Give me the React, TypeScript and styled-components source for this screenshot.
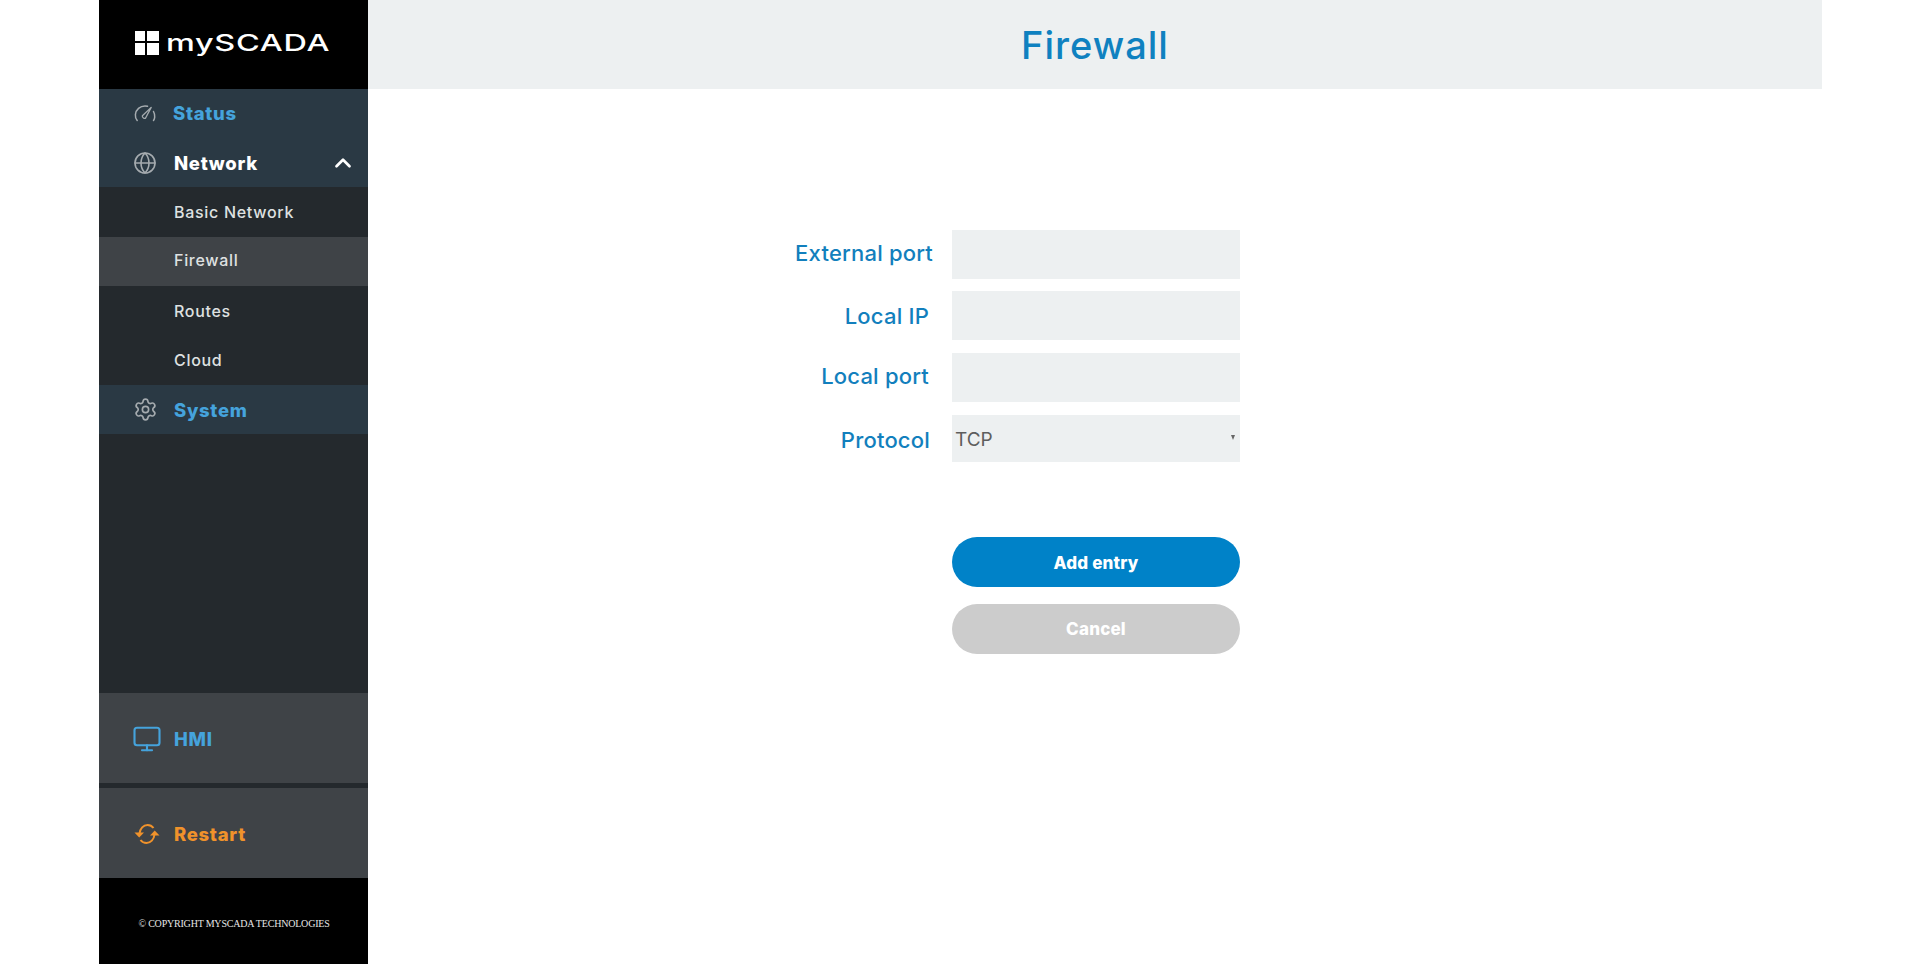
import React from "react";
import styled, { createGlobalStyle } from "styled-components";
import { ChevronUp, Globe, Monitor, Settings } from "lucide-react";

const GlobalStyle = createGlobalStyle`
  html, body {
    margin: 0;
    background: #fff;
    font-family: "Inter", "Liberation Sans", sans-serif;
  }
  * {
    box-sizing: border-box;
  }
`;

const Page = styled.div`
  display: flex;
  width: 1723px;
  height: 964px;
  margin-left: 99px;
`;

const Sidebar = styled.aside`
  display: flex;
  flex-direction: column;
  width: 269px;
  flex-shrink: 0;
  background: #24292d;
`;

const Brand = styled.div`
  display: flex;
  align-items: center;
  gap: 7px;
  height: 89px;
  padding: 0 0 4px 36px;
  background: #000;
`;

const LogoMark = styled.div`
  display: grid;
  grid-template-columns: 10px 12px;
  grid-template-rows: 10px 12px;
  gap: 2px;
  span {
    background: #fff;
  }
`;

const LogoText = styled.span`
  color: #fff;
  font-size: 23px;
  font-weight: 500;
  letter-spacing: 0.5px;
  transform: scaleX(1.41);
  transform-origin: left center;
`;

const NavItem = styled.div<{ $height?: number; $drop?: number }>`
  display: flex;
  align-items: center;
  height: ${(p) => p.$height ?? 49}px;
  padding-left: 35px;
  padding-top: ${(p) => p.$drop ?? 0}px;
  background: #2a3944;
  color: #a5abaf;
`;

const NavIcon = styled.span<{ $width?: number; $gap?: number }>`
  display: flex;
  justify-content: center;
  width: ${(p) => p.$width ?? 22}px;
  margin-right: ${(p) => p.$gap ?? 18}px;
  svg {
    flex-shrink: 0;
  }
`;

const NavLabel = styled.span<{ $color: string }>`
  flex: 1;
  color: ${(p) => p.$color};
  font-size: 18.5px;
  font-weight: 800;
  letter-spacing: 0.7px;
`;

const Caret = styled.span`
  display: flex;
  margin-right: 12px;
  color: #fff;
`;

const SubItem = styled.div<{ $active?: boolean; $height?: number; $lift?: number }>`
  display: flex;
  align-items: center;
  height: ${(p) => p.$height ?? 50}px;
  padding-left: 75px;
  padding-bottom: ${(p) => p.$lift ?? 0}px;
  background: ${(p) => (p.$active ? "#3f4347" : "transparent")};
  color: #dfe1e1;
  font-size: 16px;
  font-weight: 500;
  letter-spacing: 0.7px;
`;

const Spacer = styled.div`
  flex: 1;
`;

const BottomItem = styled.div`
  display: flex;
  align-items: center;
  height: 90px;
  padding: 1px 0 0 35px;
  background: #3f4347;
`;

const Divider = styled.div`
  height: 5px;
`;

const Copyright = styled.div`
  display: flex;
  align-items: center;
  justify-content: center;
  height: 86px;
  padding: 5px 0 0 1px;
  background: #000;
  color: #e6e6e6;
  font-family: "Liberation Serif", serif;
  font-size: 10px;
  letter-spacing: -0.2px;
  white-space: nowrap;
`;

const Main = styled.main`
  flex: 1;
`;

const Header = styled.header`
  display: flex;
  align-items: center;
  justify-content: center;
  height: 89px;
  background: #edf0f1;
`;

const Title = styled.h1`
  margin: 0;
  color: #0f81c0;
  font-size: 38px;
  font-weight: 500;
  letter-spacing: 1px;
`;

const Form = styled.form`
  display: flex;
  flex-direction: column;
  padding: 141px 0 0 584px;
`;

const Row = styled.div<{ $mb: number }>`
  position: relative;
  display: flex;
  margin-bottom: ${(p) => p.$mb}px;
`;

const FieldLabel = styled.label<{ $right: number; $top: number }>`
  position: absolute;
  top: ${(p) => p.$top}px;
  right: calc(100% + ${(p) => p.$right}px);
  color: #127fbd;
  font-size: 22px;
  font-weight: 500;
  letter-spacing: 0.2px;
  white-space: nowrap;
`;

const Field = styled.input`
  display: block;
  width: 288px;
  height: 49px;
  border: 0;
  outline: 0;
  background: #edf0f1;
`;

const Select = styled.div`
  position: relative;
  width: 288px;
  height: 47px;
  padding: 13px 0 0 3px;
  background: #edf0f1;
  color: #5e5e5e;
  font-size: 19px;
`;

const SelectArrow = styled.span`
  position: absolute;
  top: 20px;
  right: 5px;
  border-left: 2.5px solid transparent;
  border-right: 2.5px solid transparent;
  border-top: 5px solid #666;
`;

const PillButton = styled.button<{ $bg: string; $drop?: number }>`
  display: block;
  width: 288px;
  height: 50px;
  margin-bottom: 17px;
  padding: ${(p) => p.$drop ?? 0}px 0 0;
  border: 0;
  border-radius: 25px;
  background: ${(p) => p.$bg};
  color: #fff;
  font-family: inherit;
  font-size: 17px;
  font-weight: 800;
  letter-spacing: 0.2px;
`;

const Actions = styled.div`
  margin-top: 75px;
`;

const StatusIcon = () => (
  <svg width="22" height="18" viewBox="0 0 22 18" fill="none" stroke="#a5abaf" strokeWidth="1.5" strokeLinecap="round">
    <path d="M3.200 16.500C1.800 14.800 1.200 12.800 1.400 10.600 1.900 5.600 6 2 11 2c.9 0 1.700.1 2.500.3" />
    <path d="M19.500 7.500c1 1.800 1.400 3.700 1.200 5.600-.1 1.200-.5 2.400-1.200 3.400" />
    <path d="M8.400 11.800 17.200 3.400 11.600 14C10.600 15.200 7.800 13.400 8.400 11.800Z" strokeLinejoin="round" strokeWidth="1.300" />
  </svg>
);

const RestartIcon = () => (
  <svg width="26" height="22" viewBox="0 0 26 22" fill="none" stroke="#f0922b" strokeWidth="2">
    <path d="M5.500 10.500C6 5.500 9.500 2 13.500 2c2.500 0 4.500 1 6 3" />
    <path d="M20.500 11.500C20 16.500 16.500 20 12.500 20c-2.500 0-4.500-1-6-3" />
    <path d="M0.500 9.500h9.500L5.200 14.500Z" fill="#f0922b" stroke="none" />
    <path d="M16 12.500h9.500L20.700 7.500Z" fill="#f0922b" stroke="none" />
  </svg>
);

const App = () => {
  return (
    <>
      <GlobalStyle />
      <Page>
        <Sidebar>
          <Brand>
            <LogoMark>
              <span />
              <span />
              <span />
              <span />
            </LogoMark>
            <LogoText>mySCADA</LogoText>
          </Brand>
          <NavItem $height={48}>
            <NavIcon $gap={17}>
              <StatusIcon />
            </NavIcon>
            <NavLabel $color="#45a3dc">Status</NavLabel>
          </NavItem>
          <NavItem $height={50} $drop={1}>
            <NavIcon>
              <Globe size={24} strokeWidth={1.6} />
            </NavIcon>
            <NavLabel $color="#fff">Network</NavLabel>
            <Caret>
              <ChevronUp size={26} strokeWidth={2.5} />
            </Caret>
          </NavItem>
          <SubItem>Basic Network</SubItem>
          <SubItem $active $height={49} $lift={3}>
            Firewall
          </SubItem>
          <SubItem>Routes</SubItem>
          <SubItem $height={49} $lift={2}>
            Cloud
          </SubItem>
          <NavItem>
            <NavIcon>
              <Settings size={25} strokeWidth={1.6} />
            </NavIcon>
            <NavLabel $color="#45a3dc">System</NavLabel>
          </NavItem>
          <Spacer />
          <BottomItem>
            <NavIcon $width={26} $gap={14}>
              <Monitor size={30} strokeWidth={1.7} color="#45a3dc" />
            </NavIcon>
            <NavLabel $color="#45a3dc">HMI</NavLabel>
          </BottomItem>
          <Divider />
          <BottomItem>
            <NavIcon $width={26} $gap={14}>
              <RestartIcon />
            </NavIcon>
            <NavLabel $color="#f0922b">Restart</NavLabel>
          </BottomItem>
          <Copyright>© COPYRIGHT MYSCADA TECHNOLOGIES</Copyright>
        </Sidebar>
        <Main>
          <Header>
            <Title>Firewall</Title>
          </Header>
          <Form>
            <Row $mb={12}>
              <FieldLabel $right={19} $top={10}>
                External port
              </FieldLabel>
              <Field />
            </Row>
            <Row $mb={13}>
              <FieldLabel $right={23} $top={12}>
                Local IP
              </FieldLabel>
              <Field />
            </Row>
            <Row $mb={13}>
              <FieldLabel $right={23} $top={10}>
                Local port
              </FieldLabel>
              <Field />
            </Row>
            <Row $mb={0}>
              <FieldLabel $right={22} $top={12}>
                Protocol
              </FieldLabel>
              <Select>
                TCP
                <SelectArrow />
              </Select>
            </Row>
            <Actions>
              <PillButton type="button" $bg="#0082c8" $drop={2}>
                Add entry
              </PillButton>
              <PillButton type="button" $bg="#cccccc">
                Cancel
              </PillButton>
            </Actions>
          </Form>
        </Main>
      </Page>
    </>
  );
};

export default App;
